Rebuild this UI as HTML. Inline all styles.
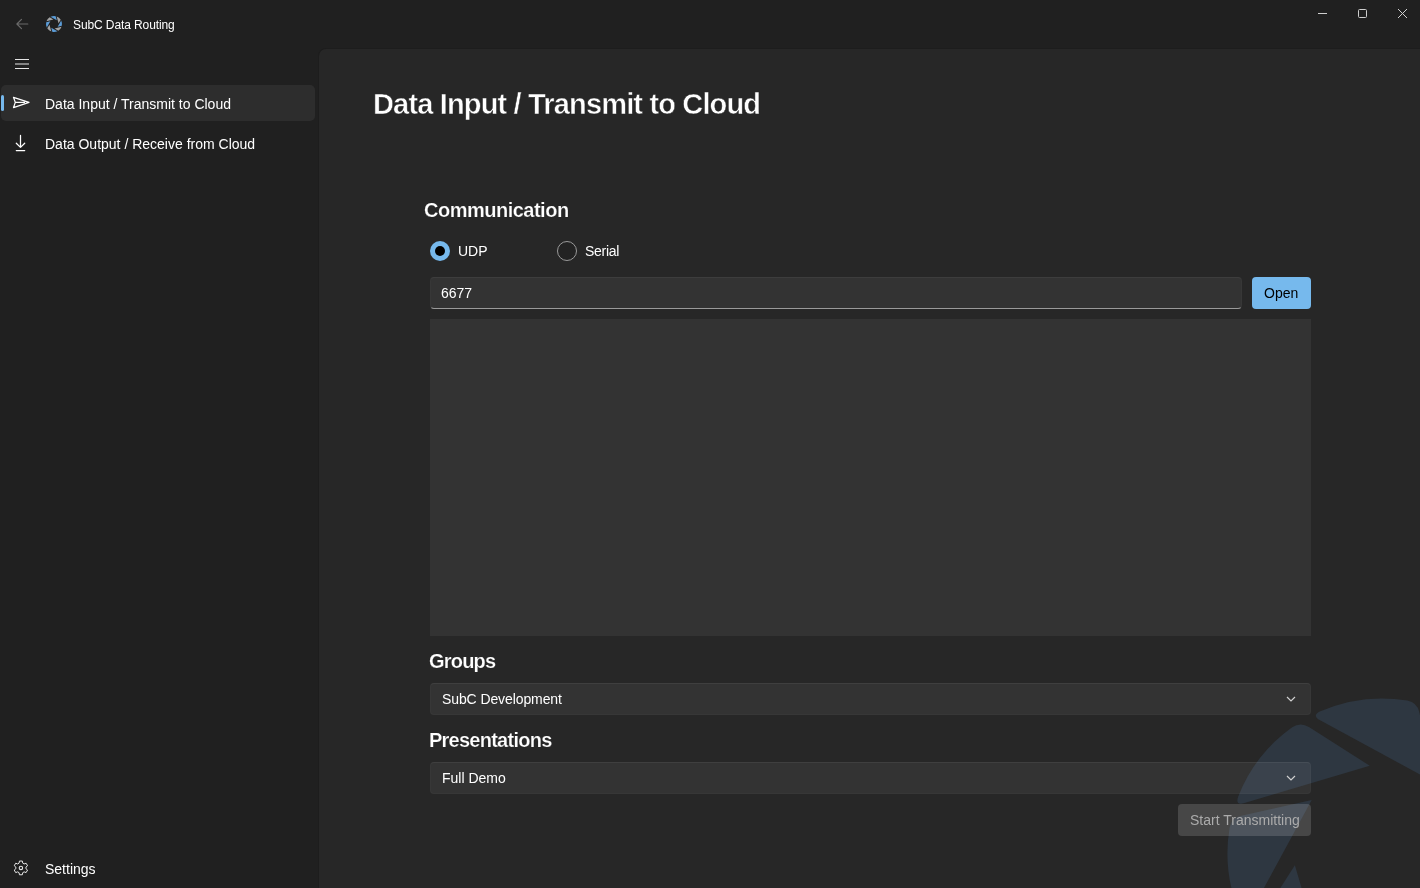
<!DOCTYPE html>
<html>
<head>
<meta charset="utf-8">
<style>
html,body{margin:0;padding:0;}
body{width:1420px;height:888px;overflow:hidden;background:#202020;position:relative;font-family:"Liberation Sans",sans-serif;color:#fff;}
.a{position:absolute;white-space:nowrap;will-change:transform;}
.t12{font-size:12px;line-height:16px;}
.t14{font-size:14px;line-height:20px;}
.h20{font-size:20px;line-height:28px;font-weight:700;-webkit-text-stroke:0.2px #272727;}
#content{position:absolute;left:318px;top:48px;width:1102px;height:840px;background:#272727;border-top-left-radius:8px;box-sizing:border-box;border-left:1px solid #1d1d1d;border-top:1px solid #1d1d1d;overflow:hidden;}
</style>
</head>
<body>
<!-- Title bar -->
<svg class="a" style="left:14px;top:17px" width="16" height="14" viewBox="0 0 16 14">
  <path d="M7.5 2.4 L2.9 7 L7.5 11.6 M2.9 7 H13.8" stroke="#6a6a6a" stroke-width="1.2" fill="none" stroke-linecap="round" stroke-linejoin="round"/>
</svg>
<svg class="a" style="left:0;top:0" width="80" height="48" viewBox="0 0 80 48"><path d="M53.37 19.49L46.45 21.35A8 8 0 0 1 49.67 17.27ZM58.51 23.37L56.65 16.45A8 8 0 0 1 60.73 19.67ZM54.63 28.51L61.55 26.65A8 8 0 0 1 58.33 30.73ZM49.49 24.63L51.35 31.55A8 8 0 0 1 47.27 28.33Z" fill="#a3a3a3"/><path d="M56.74 20.37L50.54 16.79A8 8 0 0 1 55.69 16.18ZM57.63 26.74L61.21 20.54A8 8 0 0 1 61.82 25.69ZM51.26 27.63L57.46 31.21A8 8 0 0 1 52.31 31.82ZM50.37 21.26L46.79 27.46A8 8 0 0 1 46.18 22.31Z" fill="#5b9bd5"/></svg>
<div class="a t12" style="left:73.4px;top:17px;letter-spacing:-0.1px;">SubC Data Routing</div>

<!-- caption buttons -->
<svg class="a" style="left:1310px;top:0" width="110" height="30" viewBox="0 0 110 30">
  <path d="M8 13.5 H17" stroke="#cfcfcf" stroke-width="1" fill="none"/>
  <rect x="48.5" y="9.5" width="8" height="8" rx="1" stroke="#cfcfcf" stroke-width="1" fill="none"/>
  <path d="M88 9 L97 18 M97 9 L88 18" stroke="#cfcfcf" stroke-width="1" fill="none"/>
</svg>

<!-- hamburger -->
<svg class="a" style="left:14px;top:56px" width="16" height="16" viewBox="0 0 16 16">
  <path d="M1 3.5 H15 M1 8 H15 M1 12.5 H15" stroke="#e6e6e6" stroke-width="1" fill="none"/>
</svg>

<!-- nav items -->
<div class="a" style="left:1px;top:85px;width:314px;height:36px;background:#2d2d2d;border-radius:5px;"></div>
<div class="a" style="left:1px;top:95px;width:3px;height:16px;background:#76b9ed;border-radius:2px;"></div>
<svg class="a" style="left:12px;top:95px" width="18" height="15" viewBox="0 0 18 15">
  <path d="M1.5 2.3 L17 7.4 L1.5 12.6 L3.3 7.4 Z M3.3 7.4 H13" stroke="#fff" stroke-width="1.25" fill="none" stroke-linejoin="round"/>
</svg>
<div class="a t14" style="left:45px;top:94px;">Data Input / Transmit to Cloud</div>

<svg class="a" style="left:12px;top:133px" width="18" height="20" viewBox="0 0 18 20">
  <path d="M8.5 2.4 V14.3 M4.3 10.2 L8.5 14.4 L12.7 10.2 M4.3 17.5 H12.7" stroke="#fff" stroke-width="1.25" fill="none" stroke-linecap="round" stroke-linejoin="round"/>
</svg>
<div class="a t14" style="left:45px;top:134px;">Data Output / Receive from Cloud</div>

<!-- settings -->
<svg class="a" style="left:0;top:850px" width="40" height="38" viewBox="0 850 40 38">
  <path d="M19.07 863.14 L19.44 861.05 L22.36 861.05 L22.73 863.14 L24.11 863.94 L26.10 863.22 L27.56 865.74 L25.94 867.10 L25.94 868.70 L27.56 870.06 L26.10 872.58 L24.11 871.86 L22.73 872.66 L22.36 874.75 L19.44 874.75 L19.07 872.66 L17.69 871.86 L15.70 872.58 L14.24 870.06 L15.86 868.70 L15.86 867.10 L14.24 865.74 L15.70 863.22 L17.69 863.94Z" stroke="#e8e8e8" stroke-width="1" fill="none" stroke-linejoin="round"/>
  <circle cx="20.9" cy="867.9" r="1.7" stroke="#e8e8e8" stroke-width="1.1" fill="none"/>
</svg>
<div class="a t14" style="left:45px;top:859px;">Settings</div>

<div id="content"></div>

<!-- watermark -->
<svg class="a" style="left:319px;top:49px" width="1101" height="839" viewBox="319 49 1101 839"><path d="M1369.75 765.86L1244.47 802.97Q1234.88 805.81 1238.24 796.39A154.5 154.5 0 0 1 1292.19 727.29Q1300.51 721.74 1308.94 727.11ZM1434.96 782.72L1320.13 720.37Q1311.34 715.60 1320.38 711.32A154.5 154.5 0 0 1 1407.38 700.60Q1417.19 702.56 1419.35 712.32ZM1469.14 840.75L1432.03 715.47Q1429.19 705.88 1438.61 709.24A154.5 154.5 0 0 1 1507.71 763.19Q1513.26 771.51 1507.89 779.94ZM1452.28 905.96L1514.63 791.13Q1519.40 782.34 1523.68 791.38A154.5 154.5 0 0 1 1534.40 878.38Q1532.44 888.19 1522.68 890.35ZM1394.25 940.14L1519.53 903.03Q1529.12 900.19 1525.76 909.61A154.5 154.5 0 0 1 1471.81 978.71Q1463.49 984.26 1455.06 978.89ZM1329.04 923.28L1443.87 985.63Q1452.66 990.40 1443.62 994.68A154.5 154.5 0 0 1 1356.62 1005.40Q1346.81 1003.44 1344.65 993.68ZM1294.86 865.25L1331.97 990.53Q1334.81 1000.12 1325.39 996.76A154.5 154.5 0 0 1 1256.29 942.81Q1250.74 934.49 1256.11 926.06ZM1311.72 800.04L1249.37 914.87Q1244.60 923.66 1240.32 914.62A154.5 154.5 0 0 1 1229.60 827.62Q1231.56 817.81 1241.32 815.65Z" fill="#2e3741"/></svg>

<div class="a" style="left:373px;top:86px;font-size:29px;line-height:36px;font-weight:700;letter-spacing:-0.84px;-webkit-text-stroke:0.5px #272727;">Data Input / Transmit to Cloud</div>

<div class="a h20" style="left:424px;top:196px;letter-spacing:-0.5px;">Communication</div>

<!-- radios -->
<div class="a" style="left:430px;top:241px;width:20px;height:20px;border-radius:50%;background:#76b9ed;"></div>
<div class="a" style="left:435px;top:246px;width:10px;height:10px;border-radius:50%;background:#000;"></div>
<div class="a t14" style="left:458px;top:241px;">UDP</div>
<div class="a" style="left:557px;top:241px;width:20px;height:20px;border-radius:50%;box-sizing:border-box;border:1px solid #9a9a9a;background:rgba(0,0,0,0.1);"></div>
<div class="a t14" style="left:585px;top:241px;letter-spacing:-0.3px;">Serial</div>

<!-- textbox -->
<div class="a" style="left:430px;top:277px;width:812px;height:32px;border-radius:4px;background:rgba(255,255,255,0.06);box-sizing:border-box;border:1px solid rgba(255,255,255,0.02);border-top-color:rgba(255,255,255,0.05);border-bottom:1px solid #9a9a9a;"></div>
<div class="a t14" style="left:441px;top:283px;">6677</div>

<!-- open button -->
<div class="a" style="left:1252px;top:277px;width:59px;height:32px;border-radius:4px;background:#76b9ed;"></div>
<div class="a t14" style="left:1264px;top:283px;color:#000;">Open</div>

<!-- log area -->
<div class="a" style="left:430px;top:319px;width:881px;height:317px;background:#333333;"></div>

<div class="a h20" style="left:429px;top:647px;letter-spacing:-0.8px;">Groups</div>
<div class="a" style="left:430px;top:683px;width:881px;height:32px;border-radius:4px;background:rgba(255,255,255,0.06);box-sizing:border-box;border:1px solid rgba(255,255,255,0.025);border-top-color:rgba(255,255,255,0.06);"></div>
<div class="a t14" style="left:442px;top:689px;letter-spacing:-0.1px;">SubC Development</div>
<svg class="a" style="left:1285px;top:694px" width="12" height="10" viewBox="0 0 12 10"><path d="M2 3 L6 7 L10 3" stroke="#d0d0d0" stroke-width="1.2" fill="none"/></svg>

<div class="a h20" style="left:429px;top:726px;letter-spacing:-0.75px;">Presentations</div>
<div class="a" style="left:430px;top:762px;width:881px;height:32px;border-radius:4px;background:rgba(255,255,255,0.06);box-sizing:border-box;border:1px solid rgba(255,255,255,0.025);border-top-color:rgba(255,255,255,0.06);"></div>
<div class="a t14" style="left:442px;top:768px;">Full Demo</div>
<svg class="a" style="left:1285px;top:773px" width="12" height="10" viewBox="0 0 12 10"><path d="M2 3 L6 7 L10 3" stroke="#d0d0d0" stroke-width="1.2" fill="none"/></svg>

<div class="a" style="left:1178px;top:804px;width:133px;height:32px;border-radius:4px;background:rgba(255,255,255,0.15);"></div>
<div class="a t14" style="left:1190px;top:810px;color:#ababab;">Start Transmitting</div>

</body>
</html>
